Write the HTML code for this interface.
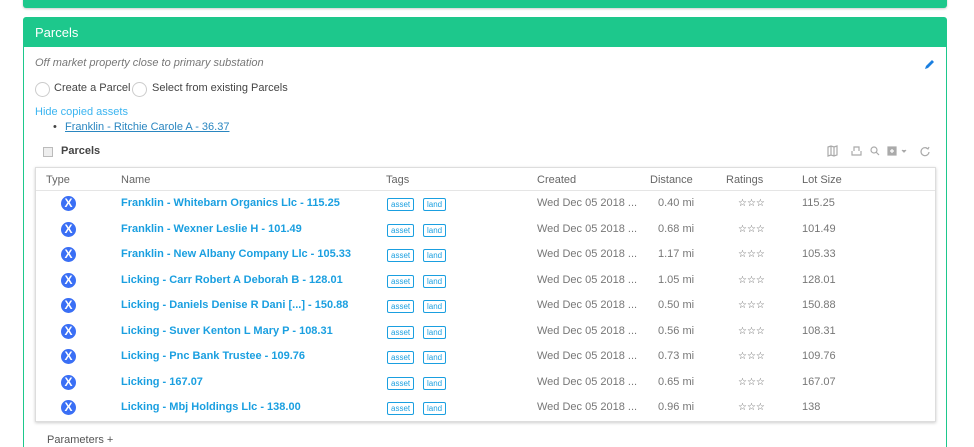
<!DOCTYPE html>
<html><head><style>
html,body{margin:0;width:974px;height:447px;overflow:hidden}
body{background:#fff;font-family:"Liberation Sans",sans-serif;position:relative;color:#555}
.top{position:absolute;left:23px;top:-4px;width:924px;height:12px;background:#1dc88c;border-radius:3px;box-shadow:0 1px 2px rgba(0,0,0,.2)}
.panel{position:absolute;left:23px;top:17px;width:922px;height:440px;border:1px solid #1dc88c;border-radius:3px;box-sizing:border-box;width:924px}
.ph{height:29px;background:#1dc88c;color:#fff;font-size:13px;line-height:29px;padding-left:11px}
.abs{position:absolute}
.radio{position:absolute;width:13px;height:13px;border:1px solid #ccc;border-radius:50%}
.box{position:absolute;left:35px;top:167px;width:899px;height:253px;border:1px solid #ddd;box-shadow:0 1px 3px rgba(0,0,0,.2)}
.hd{position:absolute;top:0;height:22px;line-height:24px;font-size:11px;color:#666}
.row{position:absolute;left:0;width:899px;height:25.5px}
.c{position:absolute;top:0;line-height:25px;font-size:11px}
.ic{position:absolute;left:25px;top:5px;width:15px;height:15px;border-radius:50%;background:#3a6ff5;color:#fff;font-size:12px;font-weight:bold;text-align:center;line-height:15px}
.nm{left:85px;color:#1a9fe0;font-weight:bold}
.tg{position:absolute;top:7px;height:11px;border:1px solid #1a9fe0;border-radius:2px;color:#1a9fe0;font-size:8px;line-height:11px;padding:0 3px;box-sizing:content-box}
</style></head><body>
<div class="top"></div>
<div class="panel"><div class="ph">Parcels</div></div>
<div class="abs" style="left:35px;top:57px;font-size:11px;font-style:italic;color:#777">Off market property close to primary substation</div>
<svg class="abs" style="left:924px;top:59px" width="11" height="11"><path d="M1 10 L2 7 L8 1 L10 3 L4 9 Z" fill="#1a7fe0"/></svg>
<div class="radio" style="left:35px;top:82px"></div><div class="abs" style="left:54px;top:82px;font-size:11px;color:#444">Create a Parcel</div>
<div class="radio" style="left:132px;top:82px"></div><div class="abs" style="left:152px;top:82px;font-size:11px;color:#444">Select from existing Parcels</div>
<div class="abs" style="left:35px;top:106px;font-size:11px;color:#3ab4f0">Hide copied assets</div>
<div class="abs" style="left:53px;top:121px;font-size:11px;color:#444">•</div>
<div class="abs" style="left:65px;top:121px;font-size:11px;color:#2a86c0;text-decoration:underline">Franklin - Ritchie Carole A - 36.37</div>
<div class="abs" style="left:43px;top:147px;width:8px;height:8px;border:1px solid #bbb;background:#eee"></div>
<div class="abs" style="left:61px;top:145px;font-size:11px;font-weight:bold;color:#444">Parcels</div>
<svg class="abs" style="left:826px;top:144px" width="110" height="14" fill="none" stroke="#aaa" stroke-width="1.2">
<path d="M2 3 L5 2 L8 3 L11 2 L11 11 L8 12 L5 11 L2 12 Z M5 2 V11 M8 3 V12"/>
<path d="M26 7 V11 H35 V7 M28 7 V3 H33 V7"/>
<circle cx="48" cy="6" r="3"/><path d="M50 8 L53 11"/>
<rect x="62" y="3" width="8" height="8" fill="#aaa"/><path d="M66 5 V9 M64 7 H68" stroke="#fff"/>
<path d="M76 6 L78 8 L80 6" fill="#aaa"/>
<path d="M102 5 A4 4 0 1 0 103 8 M100 4 L102 5 L103 3"/>
</svg>
<div class="box">
<div class="hd" style="left:10px">Type</div><div class="hd" style="left:85px">Name</div><div class="hd" style="left:350px">Tags</div><div class="hd" style="left:501px">Created</div><div class="hd" style="left:614px">Distance</div><div class="hd" style="left:690px">Ratings</div><div class="hd" style="left:766px">Lot Size</div>
<div style="position:absolute;top:22px;left:0;width:899px;border-top:1px solid #e5e5e5"></div>
<div id="rows"></div>
</div>
<div class="abs" style="left:47px;top:434px;font-size:11px;color:#555">Parameters +</div>
<script>
var d=[["Franklin - Whitebarn Organics Llc - 115.25","0.40","115.25"],["Franklin - Wexner Leslie H - 101.49","0.68","101.49"],["Franklin - New Albany Company Llc - 105.33","1.17","105.33"],["Licking - Carr Robert A Deborah B - 128.01","1.05","128.01"],["Licking - Daniels Denise R Dani [...] - 150.88","0.50","150.88"],["Licking - Suver Kenton L Mary P - 108.31","0.56","108.31"],["Licking - Pnc Bank Trustee - 109.76","0.73","109.76"],["Licking - 167.07","0.65","167.07"],["Licking - Mbj Holdings Llc - 138.00","0.96","138"]];
var h="";d.forEach(function(r,i){h+='<div class="row" style="top:'+(23+i*25.5)+'px"><div class="ic">X</div><span class="c nm">'+r[0]+'</span><span class="tg" style="left:351px">asset</span><span class="tg" style="left:387px">land</span><span class="c" style="left:501px;color:#777">Wed Dec 05 2018 ...</span><span class="c" style="left:622px;color:#777">'+r[1]+' mi</span><span class="c" style="left:702px;color:#666;font-size:10px">☆☆☆</span><span class="c" style="left:766px;color:#777">'+r[2]+'</span></div>'});
document.getElementById("rows").innerHTML=h;
</script>
</body></html>
